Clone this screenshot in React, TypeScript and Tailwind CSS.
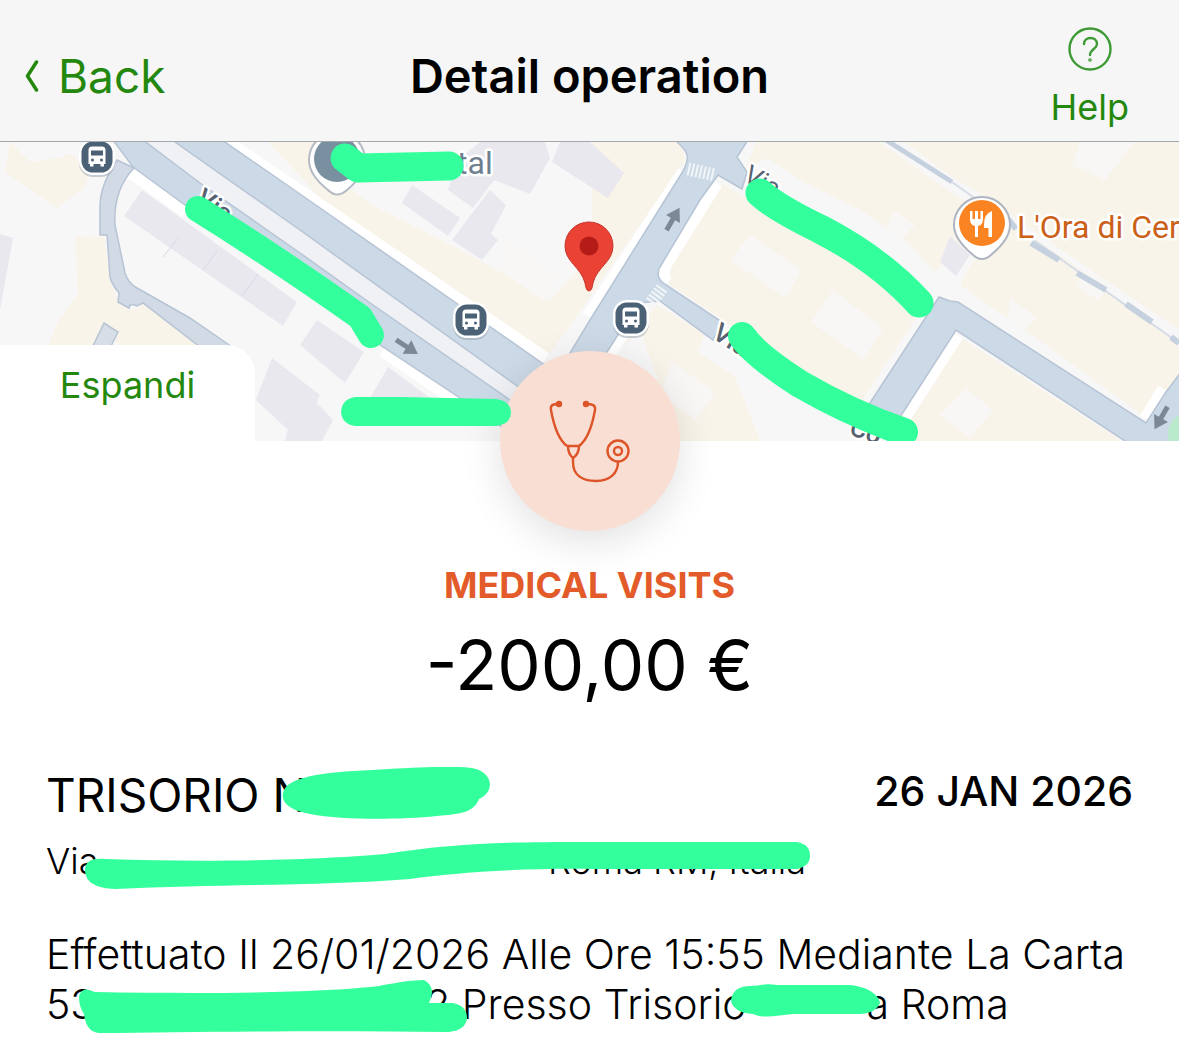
import React from 'react';
import { clsx } from 'clsx';

const BusStop = ({ x, y }: { x: number; y: number }) => (
  <g transform={`translate(${x} ${y})`}>
    <rect x="-18" y="-16" width="36" height="36" rx="14" fill="#8a97a5" opacity="0.45" />
    <rect x="-18" y="-18" width="36" height="36" rx="14" fill="#fff" />
    <rect x="-15.5" y="-15.5" width="31" height="31" rx="11.5" fill="#4b6175" />
    <path
      d="M-5-10.500H5Q8.500-10.500 8.500-7V7H7V9.500H3.500V7H-3.500V9.500H-7V7H-8.500V-7Q-8.500-10.500-5-10.500Z"
      fill="#fff"
    />
    <rect x="-6" y="-6.500" width="12" height="5" fill="#4b6175" />
    <circle cx="-4.500" cy="3" r="1.500" fill="#4b6175" />
    <circle cx="4.500" cy="3" r="1.500" fill="#4b6175" />
  </g>
);

const DirectionArrow = ({ x, y, angle }: { x: number; y: number; angle: number }) => (
  <path
    d="M-13-2.500H0V-8L13 0L0 8V2.500H-13Z"
    fill="#7b8896"
    transform={`translate(${x} ${y}) rotate(${angle})`}
  />
);

const cream = [
  '10,142 30,162 60,158 70,153 90,172 84,188 57,208 5,172',
  '75,236 104,237 110,280 118,302 134,310 145,304 196,345 118,345 104,323 93,345 48,345 60,318 78,295',
  '268,142 315,142 345,185 372,205 470,255 550,300 592,255 592,142 682,142 685,160 550,354 420,278 334,212',
  '722,184 760,206 925,304 862,400 800,372 669,284 672,262',
  '657,305 705,334 697,352 735,376 760,441 680,441 640,330 618,352',
  '745,168 757,142 879,142 945,188 985,214 935,272 905,240 860,210 800,180 768,158',
  '905,142 1179,142 1179,330 1120,290 1040,235 975,190 950,176',
  '985,240 1015,226 1070,262 1179,345 1179,375 1146,418 1060,355 960,285',
  '958,336 1122,441 905,441 902,420',
];

const lilac = [
  '0,234 13,238 0,310',
  '142,190 297,302 283,326 124,216',
  '272,358 320,395 300,441 256,400',
  '317,320 364,352 345,383 300,345',
  '388,367 430,398 395,408 370,398',
  '300,385 333,420 322,441 285,441',
  '412,185 460,218 448,236 402,203',
  '490,190 506,205 491,234 498,240 482,260 452,240 470,216',
  '480,142 545,142 550,158 530,194 494,180 473,208 448,190 458,160',
  '560,142 590,142 624,173 608,198 552,162',
  '950,236 970,255 956,276 940,262',
];

const grounds = [
  '508,238 560,276 545,302 500,270',
  '750,235 801,270 786,298 730,260',
  '833,290 883,328 864,360 811,322',
  '965,388 993,410 970,438 940,415',
  '672,362 715,392 696,420 660,394',
  '1080,142 1135,142 1105,180 1072,165',
  '1010,298 1037,318 1025,330 1008,318',
  '894,210 915,225 900,240 885,230',
  '1090,270 1110,285 1098,300 1075,285',
];

const StreetMap = () => (
  <svg
    viewBox="0 142 1179 299"
    preserveAspectRatio="xMidYMid slice"
    className="block h-[299px] w-full"
    fontFamily="Roboto, sans-serif"
    role="img"
    aria-label="Map of the operation"
  >
    <rect y="142" width="1179" height="299" fill="#f8f7f7" />
    {cream.map((points) => (
      <polygon key={points} points={points} fill="#f9f4e9" />
    ))}
    {lilac.map((points) => (
      <polygon key={points} points={points} fill="#e9e8ef" />
    ))}
    {grounds.map((points) => (
      <polygon key={points} points={points} fill="#f8f7f6" />
    ))}
    <path d="M179 237L163 257M217 251L203 270M258 274L242 296" stroke="#d8d7e2" />

    {/* pavements */}
    <path d="M226 142L545 359M130 171L186 211M383 350L465 406" stroke="#fff" strokeWidth="14" />
    <path d="M683 172L588 316M717 183L665 266Q660 276 668 282M640 306L606 360" stroke="#fff" strokeWidth="12" fill="none" />
    <path d="M1162 388L1144 418M959 336L905 420" stroke="#fff" strokeWidth="9" />

    {/* streets */}
    <polygon points="143,142 172,142 300,230 600,441 565,441 300,253" fill="#eff1f4" />
    <g fill="#ccd9e6" stroke="#b7c4d5" strokeWidth="1.500">
      <polygon points="172,140 222,140 300,194 542,363 600,404 580,430 520,388 300,230" />
      <polygon points="113,140 143,140 200,183 300,253 373,305 510,400 565,441 522,441 460,398 383,347 185,205 133,167" />
      <path
        d="M117 160Q100 185 100 207V235H107L110 277Q112 285 119 293L118 302L129 308Q130 302 137 306L143 303L200 347H232L190 318L137 288Q128 283 125 273L115 225Q113 190 134 168Z"
        fill="#d1dae5"
      />
      <polygon points="104,323 118,332 110,348 92,348" fill="#d7dee7" />
      <path d="M675 140Q690 153 687 160Q686 167 680 176L590 320L570 353L570 441L607 352L638 303L660 301L713 340L722 322L663 283Q655 276 660 267L700 200L718 175L742 189L747 172L737 157L748 140Z" />
      <path d="M939 297L950 301L958 302L1146 423L1166 392L1181 372V443H1128L956 330L895 425L868 420V406Z" />
    </g>
    <path d="M886 140L952 182" stroke="#c5d1df" strokeWidth="5" />
    <path d="M952 182L1179 343" stroke="#d5dce8" strokeWidth="2" />
    <path
      d="M1008 219L1016 229M1031 243L1059 260M1077 273L1106 290M1126 304L1152 322M1171 337L1179 343"
      stroke="#c5d1df"
      strokeWidth="6"
    />
    <path d="M688 169L715 175" stroke="#f2f5f8" strokeWidth="13" strokeDasharray="2 2" />
    <path d="M662 288L651 303" stroke="#f2f5f8" strokeWidth="13" strokeDasharray="2 2" />
    <path d="M1179 415Q1165 425 1169 441H1179Z" fill="#b9eacb" />

    <DirectionArrow x={407} y={347} angle={33} />
    <DirectionArrow x={673} y={219} angle={-60} />
    <DirectionArrow x={1161} y={418} angle={120} />

    {/* places */}
    <BusStop x={97} y={157} />
    <BusStop x={471} y={320} />
    <BusStop x={631} y={318} />

    <path d="M309 160A28 28 0 0 1 365 160Q365 175 347 190Q337 199 328 190Q309 175 309 160Z" fill="#fff" stroke="#b4bbc4" strokeWidth="2" />
    <circle cx="337" cy="159" r="23" fill="#7890a0" />

    <path d="M954 225A28 28 0 0 1 1010 225Q1010 239 992 254Q982 264 972 254Q954 239 954 225Z" fill="#fff" stroke="#aeb5c0" strokeWidth="2" />
    <circle cx="982" cy="223" r="23" fill="#fb8422" />
    <path
      d="M970 211V219Q970 225 975 226V237H978V226Q983 225 983 219V211H980.500V219H978V211H975V219H972.500V211ZM992 211Q984 214 984 224V228H988.500V237H992Z"
      fill="#fff"
    />

    <g stroke="#fff" strokeWidth="5" strokeLinejoin="round" paintOrder="stroke">
      <text x="457" y="174" fontSize="32" fill="#6f7f90">tal</text>
      <text x="1017" y="238" fontSize="32" fill="#cb6119">L'Ora di Cer</text>
      <g fontSize="26" fill="#56616f">
        <text transform="translate(742 180) rotate(29)">Via</text>
        <text transform="translate(194 202) rotate(35)" fontWeight="500">Via</text>
        <text transform="translate(711 337) rotate(33)" fontWeight="500">Via</text>
        <text transform="translate(848 434) rotate(20)" fontWeight="500">Co</text>
      </g>
    </g>

    <path
      d="M589 291Q586 291 585 283C581 267 565 262 565 246A24 24 0 0 1 613 246C613 262 597 267 593 283Q592 291 589 291Z"
      fill="#ea4335"
      stroke="#c5342b"
      strokeWidth="1"
    />
    <circle cx="589" cy="246" r="9.500" fill="#b51c18" />

    <g fill="none" stroke="#33ff9c" strokeLinecap="round" strokeLinejoin="round">
      <path d="M345 158L358 168L449 166" strokeWidth="29" />
      <path d="M198 209Q275 257 360 317L371 335" strokeWidth="26" />
      <path d="M760 193Q775 207 820 229Q880 260 919 303" strokeWidth="29" />
      <path d="M742 336Q755 355 800 384Q850 413 904 432" strokeWidth="28" />
    </g>
  </svg>
);

const Stethoscope = () => (
  <svg viewBox="0 1 180 180" className="size-[180px]" fill="none" stroke="#dd5428" strokeWidth="2.400" aria-hidden="true">
    <path d="M59 54C53 54 50 55 51 60C54 77 59 90 67 96M86 54C92 54 96 55 95 60C92 77 87 90 79 96" />
    <path d="M68 96H79Q79 104 73 108Q68 104 68 96Z" />
    <path d="M73 108V112C73 125 82 131 96 131C110 131 118 123 118 112" />
    <circle cx="59" cy="54" r="2" fill="#dd5428" />
    <circle cx="86" cy="54" r="2" fill="#dd5428" />
    <circle cx="118" cy="101" r="10.500" />
    <circle cx="118" cy="101" r="4" />
  </svg>
);

type MarkerProps = {
  width: number;
  height: number;
  d: string;
  className?: string;
};

const Marker = ({ width, height, d, className }: MarkerProps) => (
  <svg
    viewBox={`0 0 ${width} ${height}`}
    width={width}
    height={height}
    className={clsx('absolute max-w-none', className)}
    fill="#33ff9c"
    aria-hidden="true"
  >
    <path d={d} />
  </svg>
);

const Header = () => (
  <header className="grid h-[142px] grid-cols-[1fr_auto_1fr] items-center border-b border-[#a3a9ab] bg-[#f6f6f6] text-[#24880f]">
    <button type="button" className="mt-2.5 flex items-center gap-4 justify-self-start pl-[22px] text-[46px] leading-14">
      <svg viewBox="0 0 14 32" className="h-8 w-5" fill="none" stroke="currentColor" strokeWidth="3.500" strokeLinecap="round" strokeLinejoin="round" aria-hidden="true">
        <path d="M11.500 2L2.500 16L11.500 30" />
      </svg>
      Back
    </button>
    <h1 className="mt-2.5 text-[47px] leading-14 font-semibold text-black">Detail operation</h1>
    <button type="button" className="mt-3 flex flex-col items-center gap-4 justify-self-end pr-[50px] text-4xl">
      <svg viewBox="0 0 44 44" className="size-11" fill="none" stroke="#3d9a35" strokeWidth="2.400" strokeLinecap="round" aria-hidden="true">
        <circle cx="22" cy="22" r="20.500" />
        <path d="M16 17C16 9 29 9 29 17C29 22 22 22 22 28" />
        <circle cx="22" cy="33" r="0.600" />
      </svg>
      Help
    </button>
  </header>
);

const App = () => {
  return (
    <div className="min-h-screen bg-white font-['Inter',sans-serif] text-black">
      <Header />
      <main>
        <section className="relative">
          <StreetMap />
          <button
            type="button"
            className="absolute bottom-0 left-0 h-24 w-[255px] rounded-tr-[28px] bg-white pb-4 text-4xl text-[#24880f]"
          >
            Espandi
          </button>
          <div className="absolute -bottom-[90px] left-1/2 -translate-x-1/2 rounded-full bg-[#f9ded3] shadow-[0_10px_40px_rgba(0,0,0,0.12)]">
            <Stethoscope />
          </div>
          <Marker
            width={170}
            height={30}
            className="bottom-3.5 left-1/2 -ml-[249px]"
            d="M14 0H60L155 2Q170 4 170 16Q169 28 155 29H80L14 29Q1 27 0 15Q1 2 14 0Z"
          />
        </section>

        <section className="pt-[120px] text-center">
          <p className="text-4xl leading-12 font-bold text-[#e35b2a]">MEDICAL VISITS</p>
          <p className="mt-2 text-[69px] leading-24">-200,00 €</p>
        </section>

        <section className="pt-[54px] pr-10 pl-[46px]">
          <div className="flex items-start justify-between pr-1.5">
            <h2 className="relative text-[46px] leading-14">
              TRISORIO N
              <Marker
                width={210}
                height={52}
                className="top-0 left-[236px]"
                d="M1 26C4 10 40 5 90 3C140 0 180-2 194 2C212 8 212 25 197 32C192 45 180 47 155 49C115 53 60 53 28 47C8 43-1 36 1 26Z"
              />
            </h2>
            <p className="text-[41px] leading-12 font-medium">26 JAN 2026</p>
          </div>
          <p className="relative mt-3.5 flex w-[760px] justify-between text-4xl leading-12 font-light">
            <span>Via</span>
            <span>Roma RM, Italia</span>
            <Marker
              width={726}
              height={50}
              className="top-1 left-[39px]"
              d="M0 30C0 19 8 17 20 18C140 22 245 18 300 13C370 2 420 1 500 1H712Q725 3 725 15Q725 25 712 28H510C430 27 370 32 325 38C240 45 140 43 30 48Q1 47 0 30Z"
            />
          </p>
          <p className="mt-11 text-[41px] leading-[50px] font-light">
            Effettuato Il 26/01/2026 Alle Ore 15:55 Mediante La Carta 53
            <span className="relative inline-block h-8 w-[330px]">
              <Marker
                width={390}
                height={54}
                className="-top-2 -left-4"
                d="M0 18Q2 6 16 13C130 15 240 14 300 7Q330 1 345 1Q358 8 350 24H374Q388 27 388 39Q387 51 370 53C240 51 120 53 20 54Q7 53 5 35Q0 28 0 18Z"
              />
            </span>
            2 Presso Trisorio
            <span className="relative inline-block h-8 w-[120px]">
              <Marker
                width={150}
                height={34}
                className="-top-1 -left-4"
                d="M0 18Q1 4 18 3C30 3 32 0 45 2H115C132 2 148 10 149 20Q145 30 130 31H62C48 32 33 36 22 31Q3 30 0 18Z"
              />
            </span>
            a Roma
          </p>
        </section>
      </main>
    </div>
  );
};

export default App;
